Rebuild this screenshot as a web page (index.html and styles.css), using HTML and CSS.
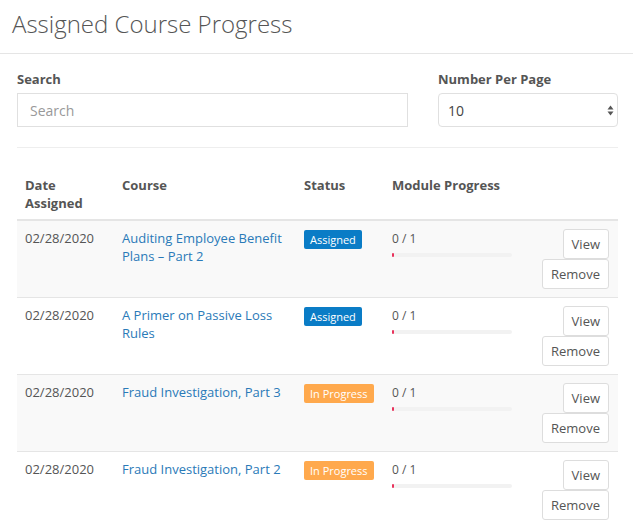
FILE: index.html
```html
<!DOCTYPE html>
<html lang="en">
<head>
  <meta charset="UTF-8">
  <meta name="viewport" content="width=device-width, initial-scale=1.0">
  <title>Assigned Course Progress</title>
  <link rel="stylesheet" href="styles.css">
</head>
<body>
  <!-- Page Header -->
  <header class="page-header">
    <h1>Assigned Course Progress</h1>
  </header>

  <div class="content">
    <!-- Filters -->
    <div class="filters">
      <div class="field">
        <label for="search">Search</label>
        <input id="search" type="text" placeholder="Search">
      </div>
      <div class="field">
        <label>Number Per Page</label>
        <div class="select">
          <span>10</span>
          <svg width="7" height="11" viewBox="0 0 7 11"><path d="M3.5 0.5 L6.5 4.5 L0.5 4.5 Z M3.5 10.5 L6.5 6.5 L0.5 6.5 Z" fill="#555"/></svg>
        </div>
      </div>
    </div>

    <hr class="divider">

    <!-- Course Table -->
    <table class="course-table">
      <thead>
        <tr>
          <th class="col-date">Date Assigned</th>
          <th class="col-course">Course</th>
          <th class="col-status">Status</th>
          <th class="col-progress">Module Progress</th>
          <th></th>
        </tr>
      </thead>
      <tbody>
        <tr>
          <td>02/28/2020</td>
          <td><a href="#">Auditing Employee Benefit Plans – Part 2</a></td>
          <td><span class="badge badge-assigned">Assigned</span></td>
          <td>
            <div class="progress-text">0 / 1</div>
            <div class="progress"><div class="progress-fill"></div></div>
          </td>
          <td><div class="actions"><button>View</button><button>Remove</button></div></td>
        </tr>
        <tr>
          <td>02/28/2020</td>
          <td><a href="#">A Primer on Passive Loss Rules</a></td>
          <td><span class="badge badge-assigned">Assigned</span></td>
          <td>
            <div class="progress-text">0 / 1</div>
            <div class="progress"><div class="progress-fill"></div></div>
          </td>
          <td><div class="actions"><button>View</button><button>Remove</button></div></td>
        </tr>
        <tr>
          <td>02/28/2020</td>
          <td><a href="#">Fraud Investigation, Part 3</a></td>
          <td><span class="badge badge-progress">In Progress</span></td>
          <td>
            <div class="progress-text">0 / 1</div>
            <div class="progress"><div class="progress-fill"></div></div>
          </td>
          <td><div class="actions"><button>View</button><button>Remove</button></div></td>
        </tr>
        <tr>
          <td>02/28/2020</td>
          <td><a href="#">Fraud Investigation, Part 2</a></td>
          <td><span class="badge badge-progress">In Progress</span></td>
          <td>
            <div class="progress-text">0 / 1</div>
            <div class="progress"><div class="progress-fill"></div></div>
          </td>
          <td><div class="actions"><button>View</button><button>Remove</button></div></td>
        </tr>
      </tbody>
    </table>
  </div>
</body>
</html>
```

FILE: styles.css
```css
body {
  font-family: "Open Sans", Arial, sans-serif;
  margin: 0;
  padding: 0;
  background-color: #fff;
  color: #555;
  font-size: 13px;
}

/* Page Header */
.page-header {
  padding: 7px 12px 0;
  height: 46px;
  border-bottom: 1px solid #e5e5e5;
}

.page-header h1 {
  margin: 0;
  font-size: 24px;
  font-weight: 300;
  color: #555;
  line-height: 33px;
}

.content {
  padding: 16px 15px 0 17px;
}

/* Filters */
.filters {
  display: grid;
  grid-template-columns: 1fr 180px;
  gap: 30px;
}

.field label {
  display: block;
  font-weight: bold;
  font-size: 13px;
  line-height: 18px;
  margin-bottom: 5px;
}

.field input {
  box-sizing: border-box;
  width: 100%;
  height: 34px;
  border: 1px solid #e0e0e0;
  padding: 0 12px;
  font-family: inherit;
  font-size: 14px;
  color: #555;
  outline: none;
}

.field input::placeholder {
  color: #999;
}

.select {
  box-sizing: border-box;
  height: 34px;
  border: 1px solid #e0e0e0;
  border-radius: 4px;
  padding: 0 3px 0 9px;
  display: flex;
  align-items: center;
  justify-content: space-between;
  font-size: 14px;
  color: #444;
}

.divider {
  border: 0;
  border-top: 1px solid #eee;
  margin: 20px 0 0;
}

/* Course Table */
.course-table {
  width: 100%;
  border-collapse: collapse;
  margin-top: 20px;
}

.course-table th {
  text-align: left;
  font-weight: bold;
  line-height: 18px;
  padding: 8px 8px 7px;
  border-bottom: 2px solid #e5e5e5;
  vertical-align: top;
}

.col-date { width: 81px; }
.col-course { width: 166px; }
.col-status { width: 72px; }
.col-progress { width: 130px; }

.course-table td {
  padding: 8px 9px 8px 8px;
  line-height: 18px;
  vertical-align: top;
  border-top: 1px solid #e5e5e5;
  height: 60px;
}

.course-table tbody tr:nth-child(odd) {
  background-color: #f9f9f9;
}

.course-table a {
  color: #2a7ab8;
  text-decoration: none;
}

.badge {
  display: inline-block;
  margin-top: 1px;
  padding: 0 6px;
  line-height: 19px;
  border-radius: 2px;
  font-size: 11px;
  font-weight: normal;
  color: #fff;
}

.badge-assigned { background-color: #0a7cc6; }
.badge-progress { background-color: #ffa94d; }

.progress-text {
  font-size: 12px;
  line-height: 18px;
  margin-top: 1px;
}

.progress {
  width: 120px;
  height: 4px;
  margin-top: 5px;
  background-color: #f2f2f2;
  border-radius: 2px;
}

.progress-fill {
  width: 2px;
  height: 4px;
  background-color: #e8335c;
  border-radius: 2px;
}

.actions {
  display: flex;
  flex-direction: column;
  align-items: flex-end;
}

.actions button {
  box-sizing: border-box;
  height: 30px;
  padding: 0 8px;
  background-color: #fff;
  border: 1px solid #ddd;
  border-radius: 3px;
  font-family: inherit;
  font-size: 13px;
  color: #555;
}
```
